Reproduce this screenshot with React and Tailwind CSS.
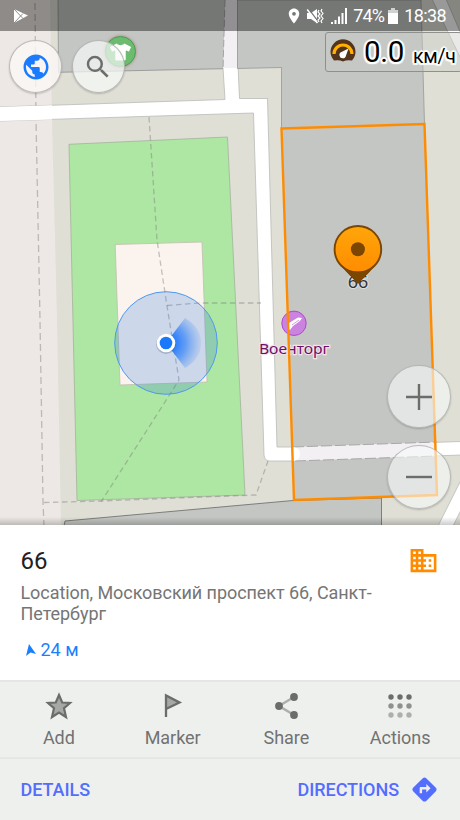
import React from "react";
import { MdPublic, MdSearch, MdBusiness, MdDirections, MdLocationOn } from "react-icons/md";
import { FaTshirt } from "react-icons/fa";

function MapCanvas() {
  const halo = { paintOrder: "stroke" };
  return (
    <svg className="block h-[525px] w-[460px]" viewBox="0 0 460 525">
      <defs>
        <linearGradient id="pin" x1="0" y1="0" x2="0" y2="1">
          <stop offset="0" stopColor="#ffa60a" />
          <stop offset="1" stopColor="#ff8c00" />
        </linearGradient>
        <radialGradient id="beam" gradientUnits="userSpaceOnUse" cx="166" cy="343" r="36">
          <stop offset="0.2" stopColor="#1f78ff" />
          <stop offset="0.55" stopColor="#4a8ff6" stopOpacity="0.8" />
          <stop offset="1" stopColor="#6fa4f0" stopOpacity="0.12" />
        </radialGradient>
        <linearGradient id="edge" x1="0" y1="0" x2="0" y2="1">
          <stop offset="0" stopColor="#000" stopOpacity="0" />
          <stop offset="1" stopColor="#000" stopOpacity="0.2" />
        </linearGradient>
      </defs>
      <rect width="460" height="525" fill="#dfdfd6" />
      <path d="M0 0H50L52 120L57 320L61 525H0Z" fill="#ede8e5" />

      {/* streets */}
      <path d="M225 0H237L238 65L239.5 98.5L267.5 98.5L277 447H293L461 441.5V455L293 461H270Q264.300 461 264 455L253.5 113L-1 121V107L225 99.500L223 68Z" fill="#fff" stroke="#b9bbb8" strokeWidth="0.8" />
      <path d="M432 -1H446L461 34V59Z" fill="#fff" stroke="#b9bbb8" strokeWidth="0.8" />
      <path d="M461 480L438 526H453L461 510Z" fill="#fff" stroke="#b9bbb8" strokeWidth="0.8" />
      <path d="M225 0H237V68H223Z" fill="#f3f0f4" />

      {/* buildings */}
      <path d="M58 0H225L223 68.700L58.500 72.300Z" fill="#c4c6c3" />
      <path d="M58 0L58.500 72.300L223 68.700" fill="none" stroke="#8f918e" strokeWidth="0.8" />
      <path d="M225 0L223 68.700" stroke="#a5a5a5" strokeDasharray="7 3" />
      <path d="M237.500 0H421L424.500 124L281.500 129V67.500L237.500 68.500Z" fill="#c4c6c3" stroke="#8f918e" strokeWidth="0.7" />
      <path d="M64 526L65 521L293 500.500L381.500 498V526Z" fill="#c4c6c3" stroke="#737572" strokeWidth="0.9" />
      <path d="M281.500 128.500L424.500 124L437 495L294 500Z" fill="#c4c6c3" />
      <path d="M293 447L437 442V456L293 461Z" fill="#f3f0f4" />
      <path d="M293 447L437 442M295 461L437 456" stroke="#a9a7a9" strokeDasharray="11 3" fill="none" />
      <path d="M292 447.300H294Q300 448 300 454T294 460.700H292Z" fill="#fff" />

      {/* park */}
      <path d="M69 144.300L227.500 137L245 495L77 500.500Z" fill="#aee6a3" stroke="#a3b49b" strokeWidth="0.8" />
      <path d="M115.200 244.500L202 242L207 382L120 385Z" fill="#fbf3ed" stroke="#c2beaf" strokeWidth="0.8" />
      <g fill="none" stroke="#777" strokeOpacity="0.42" strokeWidth="1.3" strokeDasharray="5.500 3.500">
        <path d="M35 3L36 120L40 320L43 502L44 525" strokeDasharray="7 4" />
        <path d="M149 117L157 240L167 306L179 380L101 502" />
        <path d="M167 305.500L200 303H261" />
        <path d="M44 502.500L100 501L256 495L268 461" />
      </g>
      <path d="M0 107L52 105.300V119.500L0 121Z" fill="#fff" />

      {/* current position */}
      <circle cx="166" cy="343" r="51.300" fill="#2070dc" fillOpacity="0.21" stroke="#4f98f2" strokeWidth="1" />
      <path d="M166 343L185 318Q201 327 201 343T185 368Z" fill="url(#beam)" />
      <circle cx="166" cy="344" r="10" fill="#47617f" fillOpacity="0.3" />
      <circle cx="166" cy="343" r="9.300" fill="#fff" />
      <circle cx="166" cy="343" r="6.300" fill="#1a78fa" />

      {/* shop */}
      <circle cx="294" cy="323.300" r="12.200" fill="#ca83df" stroke="#b048d0" />
      <path d="M287 328L289 323L298 317.500L302 318L300 321L293 326L290 330Z" fill="#fff" />
      <path d="M292 325L299 320" stroke="#ca83df" strokeWidth="0.8" />
      <text x="294.200" y="354" textAnchor="middle" textLength="70.500" lengthAdjust="spacingAndGlyphs" fontSize="14" fill="#6d1068" stroke="#f1e3e8" strokeWidth="2.400" style={halo} className="font-['Noto_Sans',sans-serif]">Военторг</text>
      <path d="M281.500 128.500L424.500 124L437 495L294 500Z" fill="none" stroke="#ff8c00" strokeWidth="2.400" />

      {/* selected place */}
      <text x="358" y="287.500" textAnchor="middle" textLength="20.500" lengthAdjust="spacingAndGlyphs" fontSize="16" fill="#333" stroke="#dedede" strokeWidth="2" style={halo} className="font-['Noto_Sans',sans-serif]">66</text>
      <path d="M341 266L358 284L375 266Z" fill="#7b4600" />
      <circle cx="357.900" cy="249.300" r="23.300" fill="url(#pin)" stroke="#7b4600" strokeWidth="1.900" />
      <path d="M345 270.200Q358 273 371 270.200L358 283.500Z" fill="#7b4600" />
      <circle cx="357.900" cy="249.300" r="7" fill="#7b4600" />
      <rect y="517" width="460" height="8" fill="url(#edge)" />
    </svg>
  );
}

function StatusBar() {
  return (
    <div className="absolute inset-x-0 top-0 flex h-[31px] items-center justify-between bg-black/40 pl-[13px] pr-[14px] text-white">
      <svg className="h-4 w-4" viewBox="0 0 16 16">
        <path d="M1 1L15 7.500L1 15Z" fill="#fff" />
        <path d="M1 1L10 10.500M1 15L10 5.500" stroke="#858280" strokeWidth="0.9" />
      </svg>
      <div className="flex items-center">
        <MdLocationOn className="mr-[3px] h-[18px] w-[18px]" />
        <svg className="mr-[7px] h-[18px] w-[18px]" viewBox="0 0 18 18" fill="none" stroke="#fff">
          <path d="M1 6H5L11 2V16L5 12H1Z" fill="#fff" stroke="none" />
          <path d="M2.500 2L12.500 15" stroke="#747673" strokeWidth="1.300" />
          <path d="M1.200 2.500L11.500 16" strokeWidth="1.500" />
          <path d="M13 3L12 5L14 7L12 9L14 11L12 13L13 15M16 2L15 4L17 6.500L15 9L17 11.500L15 14L16 16" strokeWidth="1.200" />
        </svg>
        <svg className="mr-[5px] h-4 w-[17px]" viewBox="0 0 17 16" fill="#fff">
          <path d="M0 14H2V16H0ZM3.500 12H5.500V16H3.500ZM7 8.500H9V16H7ZM10.500 5H12.500V16H10.500ZM14 0H16V16H14Z" />
        </svg>
        <span className="w-[35px] text-[18px] leading-none tracking-[-0.8px]">74%</span>
        <svg className="mr-[6px] h-4 w-[10px]" viewBox="0 0 10 16">
          <path d="M3 0H7V2H10V16H0V2H3Z" fill="#fff" />
          <path d="M0 2H3V0H7V2H10V5H0Z" fill="#d0d1d0" />
        </svg>
        <span className="text-[18px] leading-none tracking-[-0.6px]">18:38</span>
      </div>
    </div>
  );
}

const round = "absolute flex items-center justify-center rounded-full border border-[#aaaba8]/80 shadow-[0_1px_2px_rgba(0,0,0,0.2)]";
const outlined = "leading-none text-black [text-shadow:2px_0_1px_#fff,-2px_0_1px_#fff,0_2px_1px_#fff,0_-2px_1px_#fff,1.5px_1.5px_1px_#fff,-1.5px_1.5px_1px_#fff,1.5px_-1.5px_1px_#fff,-1.5px_-1.5px_1px_#fff]";

function SpeedWidget() {
  return (
    <div className="absolute right-[-2px] top-[32px] flex h-[40px] w-[137px] items-center rounded-[3px] border border-[#8e908d] bg-[#c8cac6]/40 pl-[4px]">
      <svg className="h-[26px] w-[26px]" viewBox="0 0 26 26">
        <path d="M4 21.500A12.500 12.500 0 1 1 22 21.500Q17 20.500 13 22.500Q9 20.500 4 21.500Z" fill="#54351c" />
        <path d="M4 15A9 9 0 1 1 22 15" fill="none" stroke="#ffb000" strokeWidth="3.200" />
        <path d="M18.500 9.500L16 16.500A3.300 3.300 0 1 1 11.500 13Z" fill="#fff" />
      </svg>
      <span className={`${outlined} ml-[8px] mt-[2px] w-[41px] text-[29.500px] tracking-[-0.3px]`}>0.0</span>
      <span className={`${outlined} ml-[8px] mt-[9px] text-[19.500px] tracking-[-0.3px]`}>км/ч</span>
    </div>
  );
}

function Action({ label, children }) {
  return (
    <button className="flex flex-col items-center pt-[10px]">
      <svg className="h-[28px] w-[28px]" viewBox="0 0 28 28">{children}</svg>
      <span className="mt-[7px] text-[18px] leading-[22px] tracking-[-0.05px] text-[#727272]">{label}</span>
    </button>
  );
}

const dots = [
  { y: 5, color: "#6b6d6b" },
  { y: 14, color: "#8f918f" },
  { y: 23, color: "#adafad" },
];

export default function App() {
  return (
    <main className="flex h-[820px] w-[460px] flex-col overflow-hidden bg-white font-[Roboto,sans-serif]">
      <section className="relative h-[525px] shrink-0 overflow-hidden">
        <MapCanvas />
        <StatusBar />
        <div className="absolute left-[105px] top-[36px] flex h-[31px] w-[31px] items-center justify-center rounded-full border border-[#4c9d54] bg-[#6cbc70] shadow-[0_0_3px_rgba(150,60,60,0.5)]">
          <FaTshirt className="h-[20px] w-[21px] text-white" />
        </div>
        <button className={`${round} left-[9px] top-[40px] h-[53px] w-[53px] bg-[#fbf8f6]/80`}>
          <MdPublic className="h-[30px] w-[30px] text-[#1a7bff]" />
        </button>
        <button className={`${round} left-[72px] top-[40px] h-[53px] w-[53px] bg-[#f7faf8]/70`}>
          <MdSearch className="mr-[2px] h-[30px] w-[30px] text-[#6b6d6b]" />
        </button>
        <SpeedWidget />
        <button className={`${round} left-[387px] top-[365px] h-[63px] w-[64px] bg-[#f7faf8]/60`}>
          <svg className="h-[26px] w-[26px]" viewBox="0 0 26 26"><path d="M13 0V26M0 13H26" stroke="#6b6d6b" strokeWidth="2.400" /></svg>
        </button>
        <button className={`${round} left-[387px] top-[445px] h-[64px] w-[64px] bg-[#f7faf8]/60`}>
          <svg className="h-[26px] w-[26px]" viewBox="0 0 26 26"><path d="M0 13H26" stroke="#6b6d6b" strokeWidth="2.400" /></svg>
        </button>
      </section>

      <section className="flex h-[155px] shrink-0 justify-between pl-[20.500px] pr-[21px] pt-[20px]">
        <div>
          <h1 className="text-[24px] leading-[32px] text-[#212121]">66</h1>
          <p className="mt-[5px] w-[370px] text-[18px] leading-[21px] tracking-[-0.07px] text-[#757575]">Location, Московский проспект 66, Санкт-<br />Петербург</p>
          <div className="mt-[15px] flex items-center text-[18px] leading-[21px] text-[#1a7fff]">
            <svg className="ml-[4px] mr-[5px] h-3 w-[11px]" viewBox="0 0 11 12"><path d="M4 0L11 10L5.500 8.500L1 12Z" fill="currentColor" /></svg>
            24 м
          </div>
        </div>
        <MdBusiness className="h-[31px] w-[31px] shrink-0 text-[#ff8c00]" />
      </section>

      <nav className="grid h-[79px] shrink-0 grid-cols-4 border-y-2 border-[#e5e7e5] bg-[#eef0ee] pl-[2px] pr-[3px]">
        <Action label="Add">
          <path d="M14 3L17.200 10.500L25 11L19 16.200L21 25L14 20.500L7 25L9 16.200L3 11L10.800 10.500Z" fill="#a5a8a5" stroke="#6b6d6b" strokeWidth="2.200" />
        </Action>
        <Action label="Marker">
          <path d="M7 3.500L21.500 10.500L7 17Z" fill="#a5a8a5" />
          <path d="M7 25V3.500L20.500 10.500L7 17" fill="none" stroke="#6b6d6b" strokeWidth="2.300" />
        </Action>
        <Action label="Share">
          <path d="M22 5L7 14L22 23" fill="none" stroke="#adafad" strokeWidth="2.500" />
          <g fill="#6b6d6b"><circle cx="22" cy="5" r="3.900" /><circle cx="7" cy="14" r="3.900" /><circle cx="22" cy="23" r="3.900" /></g>
        </Action>
        <Action label="Actions">
          {dots.map((d) => (
            <g key={d.y} fill={d.color}>
              <circle cx="5" cy={d.y} r="2.700" /><circle cx="14" cy={d.y} r="2.700" /><circle cx="23" cy={d.y} r="2.700" />
            </g>
          ))}
        </Action>
      </nav>

      <footer className="flex flex-1 items-center justify-between bg-[#eef0ee] pl-[20.500px] pr-[21px] text-[18px] font-medium tracking-[-0.05px] text-[#536dfe]">
        <button>DETAILS</button>
        <button className="flex items-center gap-[11px]">DIRECTIONS<MdDirections className="h-[29px] w-[29px]" /></button>
      </footer>
    </main>
  );
}
